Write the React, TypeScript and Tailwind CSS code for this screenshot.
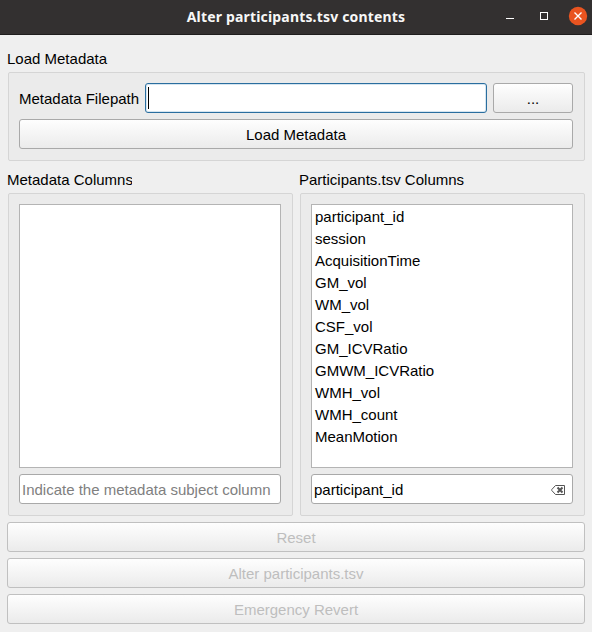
import type { ReactNode } from "react";

const columns = [
  "participant_id",
  "session",
  "AcquisitionTime",
  "GM_vol",
  "WM_vol",
  "CSF_vol",
  "GM_ICVRatio",
  "GMWM_ICVRatio",
  "WMH_vol",
  "WMH_count",
  "MeanMotion",
];

function TitleBar() {
  return (
    <header className="grid h-[35px] shrink-0 grid-cols-[1fr_auto_1fr] items-center border-b border-[#1f1d1d] bg-[#333030] text-white">
      <span />
      <h1 className="font-['Noto_Sans',sans-serif] text-[14px] leading-[34px] font-bold tracking-[0.17px] whitespace-nowrap text-[#f7f7f7]">
        Alter participants.tsv contents
      </h1>
      <div className="flex items-center justify-end pr-[4px]">
        <svg width="90" height="34" viewBox="0 0 90 34" fill="none">
          <path d="M8 18.5h8" stroke="#fff" />
          <rect x="42.5" y="12.5" width="7" height="7" stroke="#fff" />
          <circle cx="80" cy="16" r="9.2" fill="#e95420" />
          <path d="M76.5 12.5l7 7m0-7l-7 7" stroke="#fff" strokeWidth="1.4" />
        </svg>
      </div>
    </header>
  );
}

function GroupBox({ title, titleClass = "", className = "", children }: { title: string; titleClass?: string; className?: string; children: ReactNode }) {
  return (
    <section className="flex min-w-0 flex-col">
      <h2 className={`-ml-px h-[24px] leading-[22px] ${titleClass}`}>{title}</h2>
      <div className={`flex flex-col gap-[6px] rounded-[2px] border border-[#d5d5d5] bg-[#ebebeb] pt-[10px] pr-[11px] pl-[10px] ${className}`}>
        {children}
      </div>
    </section>
  );
}

function Button({ children, disabled = false, className = "" }: { children: ReactNode; disabled?: boolean; className?: string }) {
  return (
    <button
      disabled={disabled}
      className={`h-[30px] shrink-0 rounded-[3px] border bg-linear-to-b from-[#fefefe] to-[#ebebeb] pt-[2px] leading-[26px] ${
        disabled ? "border-[#c0c0c0] text-[#bebebe]" : "border-[#a9a9a9] text-black"
      } ${className}`}
    >
      {children}
    </button>
  );
}

function ClearIcon() {
  return (
    <svg width="14" height="10" viewBox="0 0 14 10" fill="none">
      <path d="M4.5 .5h9v9h-9L.8 5.5v-1z" stroke="#555" />
      <path d="M6.5 2.5l5 5m0-5l-5 5" stroke="#555" strokeWidth="2" />
    </svg>
  );
}

export default function App() {
  return (
    <main className="flex h-[632px] w-[592px] flex-col overflow-hidden bg-[#efefef] font-['Liberation_Sans',Arial,sans-serif] text-[15px] text-black">
      <TitleBar />
      <div className="flex flex-col pt-[13px] pr-[7px] pl-[8px]">
        <GroupBox title="Load Metadata" className="h-[89px]">
          <div className="flex items-center gap-[6px]">
            <label className="w-[120px] shrink-0 pt-[2px] whitespace-nowrap">Metadata Filepath</label>
            <div className="flex h-[30px] flex-1 items-center rounded-[3px] border border-[#2a6e9f] bg-white pl-[2px] shadow-[inset_0_0_0_1px_#d5e5f0]">
              <span className="h-[22px] w-px bg-black" />
            </div>
            <Button className="w-[80px]">...</Button>
          </div>
          <Button>Load Metadata</Button>
        </GroupBox>

        <div className="mt-[8px] grid grid-cols-[285px_285px] gap-[7px]">
          <GroupBox title="Metadata Columns" titleClass="w-[125px] overflow-hidden whitespace-nowrap" className="h-[323px]">
            <div className="h-[264px] border border-[#b4b4b4] bg-white" />
            <div className="flex h-[30px] items-center rounded-[3px] border border-[#a9a9a9] bg-white px-[2px] pt-[2px] whitespace-nowrap text-[#808080]">
              Indicate the metadata subject column
            </div>
          </GroupBox>
          <GroupBox title="Participants.tsv Columns" className="h-[323px]">
            <ul className="h-[264px] border border-[#b4b4b4] bg-white px-[3px] pt-px">
              {columns.map((name) => (
                <li key={name} className="h-[22px] leading-[22px]">
                  {name}
                </li>
              ))}
            </ul>
            <div className="flex h-[30px] items-center justify-between rounded-[3px] border border-[#a9a9a9] bg-white pt-[2px] pr-[7px] pl-[2px]">
              <span>participant_id</span>
              <ClearIcon />
            </div>
          </GroupBox>
        </div>

        <div className="mt-[6px] -ml-px flex flex-col gap-[6px]">
          <Button disabled>Reset</Button>
          <Button disabled>Alter participants.tsv</Button>
          <Button disabled>Emergency Revert</Button>
        </div>
      </div>
    </main>
  );
}
